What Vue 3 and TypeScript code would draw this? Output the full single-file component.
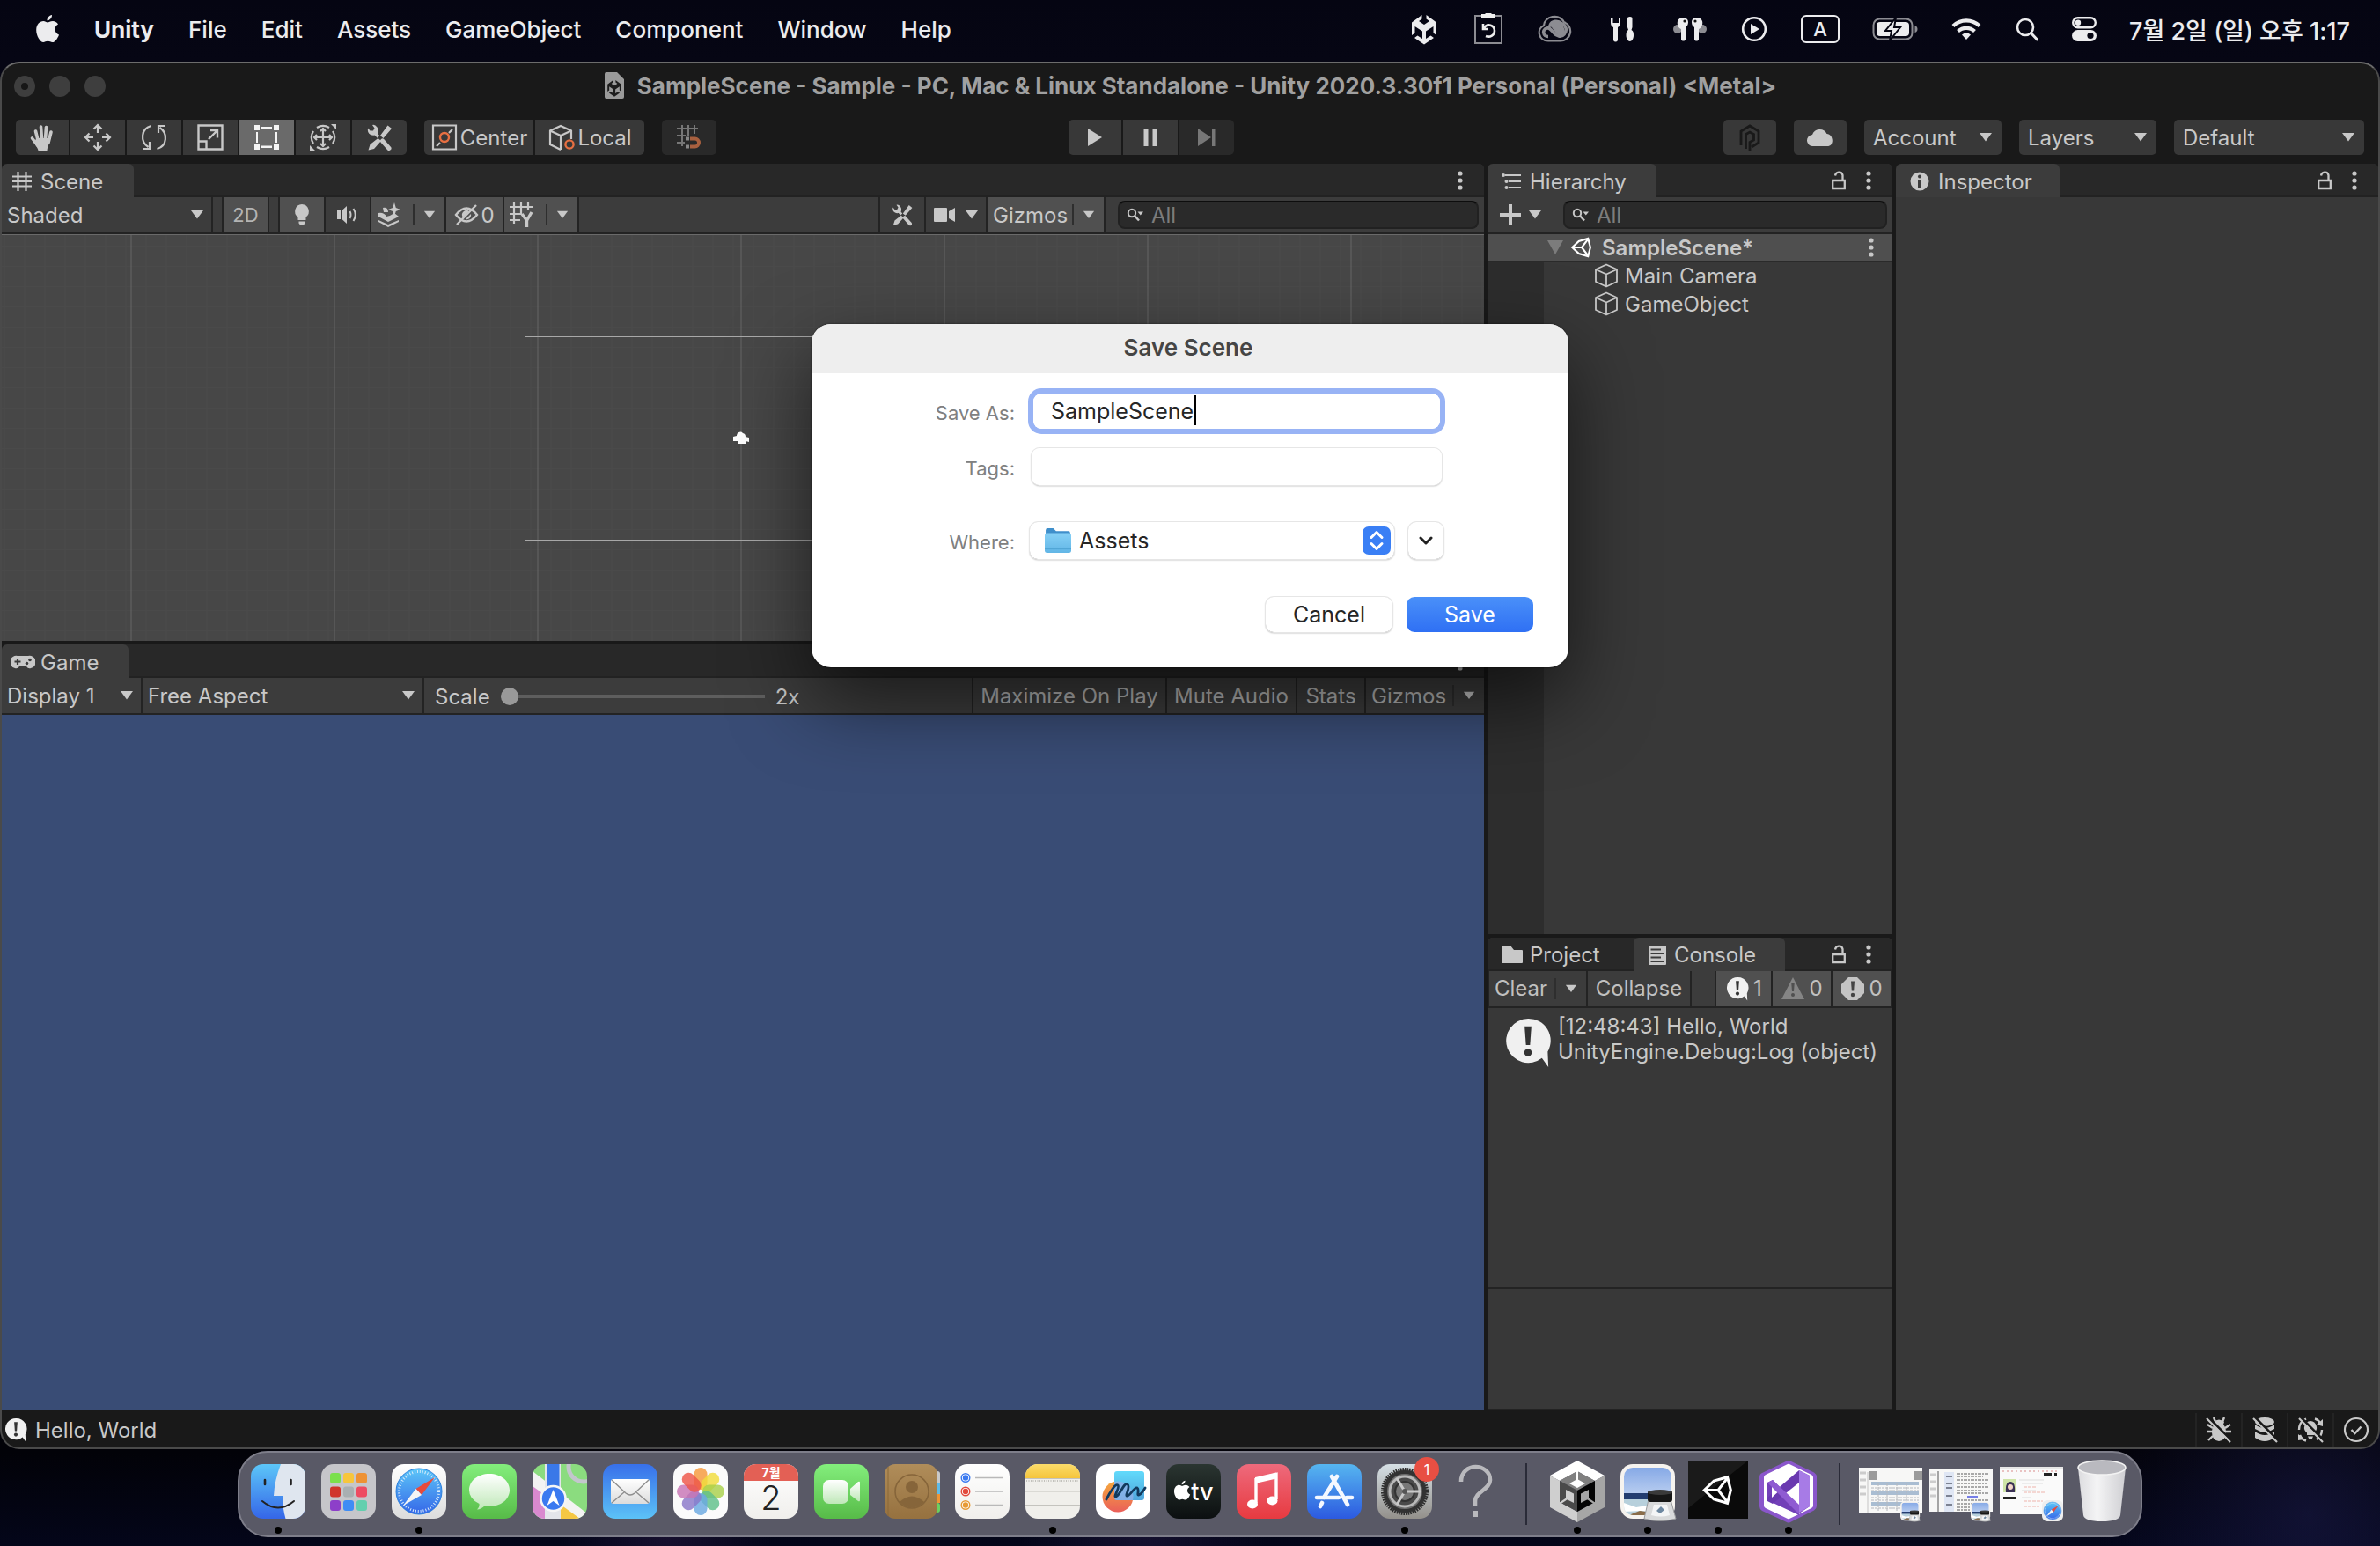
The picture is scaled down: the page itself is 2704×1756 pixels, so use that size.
<script setup lang="ts">
import { ref } from 'vue'

interface SceneObject {
  id: number
  name: string
}

const menus: string[] = ['File', 'Edit', 'Assets', 'GameObject', 'Component', 'Window', 'Help']
const objects: SceneObject[] = [
  { id: 1, name: 'Main Camera' },
  { id: 2, name: 'GameObject' },
]
const petals: { angle: number; color: string }[] = [
  { angle: 0, color: '#f5993a' },
  { angle: 45, color: '#f0dc3c' },
  { angle: 90, color: '#a8cf4a' },
  { angle: 135, color: '#5fbf8a' },
  { angle: 180, color: '#6aa8e0' },
  { angle: 225, color: '#8a78c8' },
  { angle: 270, color: '#c774b4' },
  { angle: 315, color: '#ee5548' },
]
const launchTiles: string[] = [
  '#7be04c', '#f7c63c', '#ee9234',
  '#d0352b', '#a9afb2', '#ee4b62',
  '#8d3fc9', '#3f8df5', '#62cfae',
]

const tool = ref('rect')
const fileName = ref('SampleScene')
const tags = ref('')
const sceneQuery = ref('')
const treeQuery = ref('')
const zoom = ref(1)
</script>

<template>
  <svg class="sprite" aria-hidden="true">
    <defs>
      <linearGradient id="gBlue" x1="0" y1="0" x2="0" y2="1"><stop offset="0" stop-color="#5cc6f8" /><stop offset="1" stop-color="#3566e8" /></linearGradient>
      <linearGradient id="gMail" x1="0" y1="0" x2="0" y2="1"><stop offset="0" stop-color="#3870ea" /><stop offset="1" stop-color="#5cc2f7" /></linearGradient>
      <linearGradient id="gStore" x1="0" y1="0" x2="0" y2="1"><stop offset="0" stop-color="#56b6f0" /><stop offset="1" stop-color="#2c5ae0" /></linearGradient>
      <linearGradient id="gGreen" x1="0" y1="0" x2="0" y2="1"><stop offset="0" stop-color="#83ee7c" /><stop offset="1" stop-color="#57bb48" /></linearGradient>
      <linearGradient id="gWhite" x1="0" y1="0" x2="0" y2="1"><stop offset="0" stop-color="#ffffff" /><stop offset="1" stop-color="#dcdcdc" /></linearGradient>
      <linearGradient id="gPaper" x1="0" y1="0" x2="0" y2="1"><stop offset="0" stop-color="#ffffff" /><stop offset="1" stop-color="#f0efec" /></linearGradient>
      <linearGradient id="gBubble" x1="0" y1="0" x2="0" y2="1"><stop offset="0" stop-color="#ffffff" /><stop offset="1" stop-color="#bfe8b8" /></linearGradient>
      <linearGradient id="gBrown" x1="0" y1="0" x2="0" y2="1"><stop offset="0" stop-color="#b08d5a" /><stop offset="1" stop-color="#96713f" /></linearGradient>
      <linearGradient id="gRed" x1="0" y1="0" x2="0" y2="1"><stop offset="0" stop-color="#ee6a7c" /><stop offset="1" stop-color="#e73a40" /></linearGradient>
      <linearGradient id="gTv" x1="0" y1="0" x2="0" y2="1"><stop offset="0" stop-color="#2a3531" /><stop offset="1" stop-color="#0b0f10" /></linearGradient>
      <linearGradient id="gGear" x1="0" y1="0" x2="0" y2="1"><stop offset="0" stop-color="#d5dfe5" /><stop offset="1" stop-color="#93908b" /></linearGradient>
      <linearGradient id="gYellow" x1="0" y1="0" x2="0" y2="1"><stop offset="0" stop-color="#fbdc6a" /><stop offset="1" stop-color="#f5c53c" /></linearGradient>
      <linearGradient id="gOrange" x1="0" y1="0" x2="0" y2="1"><stop offset="0" stop-color="#f5a83c" /><stop offset="1" stop-color="#ea5f5a" /></linearGradient>
      <linearGradient id="gCyan" x1="0" y1="0" x2="0" y2="1"><stop offset="0" stop-color="#62dafb" /><stop offset="1" stop-color="#4fa6dc" /></linearGradient>
      <linearGradient id="gSky" x1="0" y1="0" x2="0" y2="1"><stop offset="0" stop-color="#86a9e6" /><stop offset="1" stop-color="#b8cdf0" /></linearGradient>
      <linearGradient id="gTrash" x1="0" y1="0" x2="1" y2="0"><stop offset="0" stop-color="#dcdcdf" /><stop offset=".4" stop-color="#f4f4f5" /><stop offset="1" stop-color="#cfcfd3" /></linearGradient>
      <linearGradient id="gFolder" x1="0" y1="0" x2="0" y2="1"><stop offset="0" stop-color="#86d0f6" /><stop offset="1" stop-color="#62b6e6" /></linearGradient>
      <clipPath id="tile"><rect width="62" height="62" rx="14" /></clipPath>
      <clipPath id="shot"><rect x="4" y="4" width="54" height="54" rx="10" /></clipPath>
    </defs>
    <symbol id="down" viewBox="0 0 16 10"><path d="M1 0h14L8 9.500z" fill="currentColor" /></symbol>
    <symbol id="dots" viewBox="0 0 6 22"><g fill="currentColor"><circle cx="3" cy="3" r="2.600" /><circle cx="3" cy="11" r="2.600" /><circle cx="3" cy="19" r="2.600" /></g></symbol>
    <symbol id="lock" viewBox="0 0 18 22"><path d="M2.200 11h13.600v9H2.200zM5 5.500C5.500 1 12.500 0 13.500 5V11" fill="none" stroke="currentColor" stroke-width="2.300" /></symbol>
    <symbol id="lens" viewBox="0 0 20 16"><circle cx="6" cy="6" r="4.200" fill="none" stroke="currentColor" stroke-width="2" /><path d="M9 9l5 5.500" stroke="currentColor" stroke-width="2.500" /><path d="M12.500 4.500h6.500l-3.200 4z" fill="currentColor" /></symbol>
    <symbol id="log" viewBox="0 0 28 30"><path d="M14 1a13 13 0 1 0 8.200 23.200L26 29.500l-.4-9A13 13 0 0 0 14 1z" fill="#f0f0f0" /><path d="M12 5.500h4l-.8 11h-2.400z" fill="#333" /><circle cx="14" cy="21" r="2.200" fill="#333" /></symbol>
    <symbol id="cube" viewBox="0 0 28 28"><path d="M14 1.500L26 7v14l-12 5.500L2 21V7zM2 7l12 5.500L26 7M14 12.500v14" fill="none" stroke="currentColor" stroke-width="1.800" stroke-linejoin="round" /></symbol>
    <symbol id="unityOld" viewBox="0 0 32 32"><path d="M3 16L13 6.500 27 2.500 30.500 16 27 29.500 13 25.500zM3 16h14.500L27 3.500M17.500 16L27 28.500" fill="none" stroke="currentColor" stroke-width="2.800" stroke-linejoin="miter" /></symbol>
    <symbol id="kit" viewBox="0 0 32 32"><path d="M10.500 10.500L15 15.500" stroke="currentColor" stroke-width="3.600" /><path d="M19.500 20L27 28.500" stroke="currentColor" stroke-width="5" stroke-linecap="round" /><path d="M5.500 8.500L3 5.500Q2 11 6 13t8-1q2-4-.5-7.500T8 2l2.500 3.500-1.500 3z" fill="currentColor" /><path d="M25.500 2.500l4.500 3.500-9.500 11-3.500-3zM14.500 17l3.500 3-8 9-6.500 1.500 2-6.500z" fill="currentColor" /></symbol>
    <symbol id="apple" viewBox="0 0 28 34"><path d="M19 1c.3 3-2.500 6.500-5.500 6.300C13.200 4.500 16 1.500 19 1zM14 9.600c1.500 0 3-1.600 6-1.600 2.300 0 4.800 1.300 6 3.400-5.200 3-4.300 10 1 12-1.200 3.600-4.300 8.600-7.400 8.600-2 0-3-1.200-5.300-1.200S11 32 9.200 32C5.600 32 1.200 24.500 1.200 18.200 1.200 11.600 5.400 8 9.300 8c2 0 3.500 1.600 4.700 1.600z" fill="currentColor" /></symbol>
    <symbol id="unityNew" viewBox="0 0 32 36"><path d="M2 25V10.500L13.500 2v4.500L10 9l6 4 6-4-3.500-2.500V2L30 10.500V25l-3.500-2.500V15L18 20.500v8.500l5.500-3.500L27 28l-11 7.500L5 28l3.500-2.500L14 29v-8.500L5.500 15v7.500z" fill="currentColor" /></symbol>
    <symbol id="compass" viewBox="0 0 62 62"><circle cx="31" cy="31" r="26" fill="url(#gBlue)" stroke="#2b7fdc" stroke-width="1" /><circle cx="31" cy="31" r="22.500" fill="none" stroke="#d9ecfb" stroke-width="3" stroke-dasharray="1 1.950" /><path d="M49 15L34 35l-6.500-7z" fill="#e84a3c" /><path d="M13 47l14.500-19 6.500 7z" fill="#f5f5f5" /></symbol>
    <symbol id="photo" viewBox="0 0 70 66"><rect width="62" height="62" rx="14" fill="#f6f3ef" /><g clip-path="url(#shot)"><rect x="4" y="4" width="54" height="30" fill="url(#gSky)" /><rect x="4" y="33" width="54" height="8" fill="#233d70" /><path d="M4 40h54v20H4z" fill="#b7d0dc" /><path d="M4 44l14 5 12-2 10 4v4l-16-2-20 1z" fill="#fff" /><path d="M12 57l10-4 14 2 4 4H10z" fill="#8a6d4a" /></g><path d="M32 40h25l6 22q-18 5-36 0z" fill="#d9dadb" stroke="#9a9b9d" /><path d="M38 46h15l3 12q-10 3-21 0z" fill="#f4f5f6" /><path d="M41 53l5-5 4 4-5 4z" fill="#6d87a0" /><rect x="31" y="30" width="28" height="13" rx="3" fill="#161616" /><ellipse cx="45" cy="32" rx="14" ry="3" fill="#3a3a3a" /></symbol>
  </svg>

  <div class="desktop">
    <header class="menubar">
      <nav class="menus" aria-label="Application menu">
        <button class="menu" aria-label="Apple"><svg class="apple"><use href="#apple" /></svg></button>
        <button class="menu strong">Unity</button>
        <button v-for="m in menus" :key="m" class="menu">{{ m }}</button>
      </nav>
      <div class="extras">
        <svg class="x36" viewBox="0 0 36 36"><use href="#unityNew" x="2" width="32" height="36" /></svg>
        <svg class="x36" viewBox="0 0 36 36"><path d="M3 3h30v31H3z" fill="none" stroke="#8c8c92" stroke-width="2" /><path d="M10 1h4l1-1h6l1 1h4v5H10z" fill="#eee" /><path d="M13 12v6h6M13.500 17.500C18 10 26 14 26 20c0 5-5 8-10 6" fill="none" stroke="#eee" stroke-width="2.600" transform="translate(-1 0)" /></svg>
        <svg class="x40" viewBox="0 0 40 36"><path d="M13 31.500h14a11 11 0 0 0 4-21.300C25 0 9 3 8 14-1 18 2 31.500 13 31.500z" fill="none" stroke="#8c8c92" stroke-width="2.200" /><path d="M13 26.500c-6 0-7.500-8-1.500-9.500 3-1 5 2 8 5.500s8 5.500 11.500 1.500a7.500 7.500 0 0 0-3-12.500C24 8 17 8.500 15 14c3-1 6 1 9 5l4 4" fill="none" stroke="#8c8c92" stroke-width="3.600" /><path d="M20 11q8-2 11 6t-4 9q-4-1-8-7t-5-5z" fill="#8c8c92" /></svg>
        <svg class="x40" viewBox="0 0 40 32"><g transform="translate(4 0)"><path d="M3 3v6c0 3 1.500 4 3 5v15q2.500 3 5 0V14c1.500-1 3-2 3-5V3l-2 0v6H5.500V3z" fill="currentColor" /><path d="M22 3q3-2 5.500 0v11l-1 3c2 1 2.500 3 2.500 6 0 4-2 7-4.200 7S20.500 27 20.500 23c0-3 .5-5 2.500-6l-1-3z" fill="currentColor" /></g></svg>
        <svg class="x40" viewBox="0 0 40 34"><circle cx="6" cy="17" r="5" fill="#8c8c92" /><circle cx="34" cy="17" r="5" fill="#8c8c92" /><path d="M6 8c2-6 12-5 12 1 0 4-2 5-3 6v14c-1 2-4 2-5 0V17C7 16 5 12 6 8zM34 8c-2-6-12-5-12 1 0 4 2 5 3 6v14c1 2 4 2 5 0V17c3-1 5-5 4-9z" fill="currentColor" /><circle cx="14" cy="8" r="1.600" fill="#111" /><circle cx="26" cy="8" r="1.600" fill="#111" /></svg>
        <svg class="x32" viewBox="0 0 32 32"><circle cx="16" cy="16" r="12.800" fill="none" stroke="currentColor" stroke-width="2.600" /><path d="M12 10l10 6-10 6z" fill="currentColor" /></svg>
        <span class="input-source">A</span>
        <svg class="battery" viewBox="0 0 52 26"><rect x="1.500" y="1.500" width="44" height="23" rx="7" fill="none" stroke="#8c8c92" stroke-width="2" /><path d="M48.500 9v8q3-1 3-4t-3-4z" fill="#8c8c92" /><rect x="5" y="5" width="37" height="16" rx="4" fill="currentColor" /><path d="M27 0L15 15h7l-2 11 12-15h-7z" fill="currentColor" stroke="#050512" stroke-width="2" /></svg>
        <svg class="x36" viewBox="0 0 36 28"><path d="M3 10.500a21.500 21.500 0 0 1 30 0M8.500 16.500a14 14 0 0 1 19 0" fill="none" stroke="currentColor" stroke-width="4.200" /><path d="M18 26l-5-5.500a7.500 7.500 0 0 1 10 0z" fill="currentColor" /></svg>
        <svg class="x28" viewBox="0 0 28 28"><circle cx="12" cy="12" r="9" fill="none" stroke="currentColor" stroke-width="2.600" /><path d="M18.500 18.500l7 7.500" stroke="currentColor" stroke-width="3" stroke-linecap="round" /></svg>
        <svg class="x28" viewBox="0 0 28 28"><rect x="1.200" y="1.200" width="25.600" height="11" rx="5.500" fill="none" stroke="currentColor" stroke-width="2.400" /><circle cx="7" cy="6.700" r="3.200" fill="currentColor" /><rect y="15" width="28" height="13" rx="6.500" fill="currentColor" /><circle cx="21" cy="21.500" r="3.600" fill="#050512" /></svg>
        <time class="clock">7월 2일 (일) 오후 1:17</time>
      </div>
    </header>

    <main class="editor">
      <div class="titlebar">
        <div class="lights"><i class="edited"></i><i></i><i></i></div>
        <h1 class="title">
          <svg class="doc" viewBox="0 0 24 32"><path d="M3 1h12l8 8v20q0 2-2 2H3q-2 0-2-2V3q0-2 2-2z" fill="#9a9a9a" /><use href="#unityNew" x="3" y="9" width="18" height="20" color="#1c1c1c" /></svg>
          SampleScene - Sample - PC, Mac &amp; Linux Standalone - Unity 2020.3.30f1 Personal (Personal) &lt;Metal&gt;
        </h1>
      </div>

      <div class="maintools">
        <div class="btns">
          <button class="tb" aria-label="Hand" @click="tool = 'hand'"><svg viewBox="0 0 32 32"><path d="M8.500 9l3 12M14.500 4l1 14M20.500 4.500L19.500 18M26 10l-3 12M4.500 17l7 9" stroke="currentColor" stroke-width="3.600" stroke-linecap="round" /><path d="M9.500 17h15.500c0 6-3 8-3.500 14h-10c-.5-3-4-7-5-9z" fill="currentColor" /></svg></button>
          <button class="tb" aria-label="Move" @click="tool = 'move'"><svg viewBox="0 0 32 32"><path d="M16 2v9M16 21v9M2 16h9M21 16h9M11.500 6.500L16 2l4.500 4.500M11.500 25.500L16 30l4.500-4.500M6.500 11.500L2 16l4.500 4.500M25.500 11.500L30 16l-4.500 4.500" fill="none" stroke="currentColor" stroke-width="2.200" /></svg></button>
          <button class="tb" aria-label="Rotate" @click="tool = 'rotate'"><svg viewBox="0 0 32 32"><path d="M12.500 3C1 6 0 21 9.500 27M3.500 29h7.500v-8M19.500 29C31 26 32 11 22.500 5M28.500 3H21v8" fill="none" stroke="currentColor" stroke-width="2.200" /></svg></button>
          <button class="tb" aria-label="Scale" @click="tool = 'scale'"><svg viewBox="0 0 32 32"><path d="M2.500 2.500h27v27h-27zM2.500 20.500h9v9M14 18L24 8M16 8h8v8.500" fill="none" stroke="currentColor" stroke-width="2.400" /></svg></button>
          <button class="tb on" aria-label="Rect" @click="tool = 'rect'"><svg viewBox="0 0 32 32"><path d="M2 2h6v6H2zM24 2h6v6h-6zM2 24h6v6H2zM24 24h6v6h-6zM10 4h12v2.500H10zM10 25.500h12V28H10zM4 10h2v12H4zM26 10h2v12h-2z" fill="#f4f4f4" /></svg></button>
          <button class="tb" aria-label="Transform" @click="tool = 'transform'"><svg viewBox="0 0 32 32"><path d="M9 5a13 13 0 0 1 14 0M27 9a13 13 0 0 1 0 14M23 27a13 13 0 0 1-14 0M5 23A13 13 0 0 1 5 9M16 6v20M6 16h20M13 9l3-3 3 3M13 23l3 3 3-3M9 13l-3 3 3 3M23 13l3 3-3 3" fill="none" stroke="currentColor" stroke-width="2.200" /><path d="M25 1h6v6zM1 25v6h6z" fill="currentColor" /></svg></button>
          <button class="tb" aria-label="Custom tools" @click="tool = 'custom'"><svg><use href="#kit" /></svg></button>
        </div>
        <div class="btns pivots">
          <button class="tb wide"><svg viewBox="0 0 32 32"><path d="M3 2.500h26v27H3zM7 26l4-4M21 11l4-4" fill="none" stroke="currentColor" stroke-width="2.200" /><circle cx="16" cy="16" r="5" fill="none" stroke="#e66f42" stroke-width="2.400" /></svg>Center</button>
          <button class="tb wide"><svg viewBox="0 0 32 32"><path d="M15 30L3 24V8.500L15 3l12 5.500V18M3 8.500L15 14l12-5.500M15 14v16" fill="none" stroke="currentColor" stroke-width="2.200" /><circle cx="25" cy="24" r="4.600" fill="#383838" stroke="#e66f42" stroke-width="2.400" /></svg>Local</button>
        </div>
        <button class="tb off" aria-label="Grid snapping" disabled><svg viewBox="0 0 32 32"><path d="M8 2v24M15 2v13M22 2v10M2 6h24M2 14h10M2 22h9" fill="none" stroke="#777" stroke-width="2" /><path d="M17 17.500h5.500a4.500 4.500 0 0 1 0 9H17" fill="none" stroke="#a8603f" stroke-width="4" /><path d="M12 15.500h4v4h-4zM12 24.500h4v4h-4z" fill="#888" /></svg></button>
        <span class="spring a"></span>
        <div class="btns">
          <button class="tb" aria-label="Play"><svg viewBox="0 0 32 32"><path d="M8 6l16 10L8 26z" fill="currentColor" /></svg></button>
          <button class="tb" aria-label="Pause"><svg viewBox="0 0 32 32"><path d="M8.500 6h5v20h-5zM18.500 6h5v20h-5z" fill="currentColor" /></svg></button>
          <button class="tb off" aria-label="Step" disabled><svg viewBox="0 0 32 32"><path d="M6 6l15 10L6 26zM22 6h3.500v20H22z" fill="#777" /></svg></button>
        </div>
        <span class="spring b"></span>
        <div class="services">
          <button class="tb" aria-label="Plastic SCM"><svg viewBox="0 0 32 32"><path d="M6 25V9L16 3l10 6v13l-8 5M11.500 29V12.500L16 10l4.500 2.500v6.500L16 21.500V31" fill="none" stroke="#191919" stroke-width="2.800" /></svg></button>
          <button class="tb" aria-label="Cloud"><svg viewBox="0 0 32 32"><path d="M8 26a6.500 6.500 0 0 1-1-13 9 9 0 0 1 16.500-1C31 12 32.500 26 24 26z" fill="currentColor" /></svg></button>
          <label class="drop box"><select aria-label="Account"><option>Account</option></select><svg class="arr"><use href="#down" /></svg></label>
          <label class="drop box"><select aria-label="Layers"><option>Layers</option></select><svg class="arr"><use href="#down" /></svg></label>
          <label class="drop box layout"><select aria-label="Layout"><option>Default</option></select><svg class="arr"><use href="#down" /></svg></label>
        </div>
      </div>

      <div class="workspace">
        <div class="column">
          <section class="panel scene">
            <div class="tabs">
              <button class="tab on t-scene"><svg class="i22" viewBox="0 0 22 22"><path d="M6.500 0v22M15.500 0v22M0 5.500h22M0 11h22M0 16.500h22" stroke="currentColor" stroke-width="2.200" /></svg>Scene</button>
              <span class="tab-tools"><button class="mini" aria-label="Panel menu"><svg class="dots"><use href="#dots" /></svg></button></span>
            </div>
            <div class="bar">
              <label class="drop shaded"><select aria-label="Draw mode"><option>Shaded</option></select><svg class="arr"><use href="#down" /></svg></label>
              <div class="cells"><button class="cell on w50 dim">2D</button></div>
              <div class="cells">
                <button class="cell on w50" aria-label="Lighting"><svg class="i24" viewBox="0 0 24 24"><path d="M12 0a8 8 0 0 1 4.500 14.500V18h-9v-3.500A8 8 0 0 1 12 0zM8.500 19.500h7v2l-1.500 2h-4l-1.500-2z" fill="currentColor" /></svg></button>
                <button class="cell w50" aria-label="Audio"><svg class="i24" viewBox="0 0 24 24"><path d="M0 7h4v10H0zM5.500 7L11 2v20l-5.500-5z" fill="currentColor" /><path d="M14.500 8q2 4 0 8M18.500 5q4.500 7 0 14" fill="none" stroke="currentColor" stroke-width="2" /></svg></button>
                <button class="cell on w82 split" aria-label="Effects"><svg class="i28" viewBox="0 0 28 28"><path d="M2 12q6-1 9 4 5-1 9-4l5 4-12 6-11-6zM2 20l11 5 12-5v2l-12 6L2 22z" fill="currentColor" /><path d="M20 0l1.800 6L27 8l-5.200 2L20 16l-1.800-6L13 8l5.200-2zM7 6q6-1 6 5H8z" fill="currentColor" /></svg><svg class="arr"><use href="#down" /></svg></button>
                <button class="cell on w64 tight"><svg class="i28" viewBox="0 0 28 28"><path d="M2 14q12-15 24 0-12 15-24 0zM3 25L25 3" fill="none" stroke="currentColor" stroke-width="2.400" /><path d="M10 17a5 5 0 0 1 7-7zM13 19a5 5 0 0 0 6-6z" fill="currentColor" /></svg>0</button>
                <button class="cell on w82 split" aria-label="Grid"><svg class="i28" viewBox="0 0 28 28"><path d="M5 0v24M13 0v14M21 0v8M0 5h26M0 13h13M0 20h12" stroke="currentColor" stroke-width="2.200" /><path d="M14 13l5.500 7.500L25 11M19.500 20v8" fill="none" stroke="currentColor" stroke-width="3.400" /></svg><svg class="arr"><use href="#down" /></svg></button>
              </div>
              <span class="fill"></span>
              <div class="cells">
                <button class="cell w50" aria-label="Component tools"><svg class="i26"><use href="#kit" /></svg></button>
                <button class="cell w68 loose" aria-label="Camera"><svg class="i26" viewBox="0 0 26 20"><path d="M2 2h13q1 0 1 1v14q0 1-1 1H2q-1 0-1-1V3q0-1 1-1zM18 6l7-4v16l-7-4z" fill="currentColor" /></svg><svg class="arr"><use href="#down" /></svg></button>
                <button class="cell on w132 split">Gizmos<svg class="arr"><use href="#down" /></svg></button>
              </div>
              <label class="search scene-search"><svg class="lens"><use href="#lens" /></svg><input v-model="sceneQuery" placeholder="All" aria-label="Search scene" /></label>
            </div>
            <div class="viewport"><div class="frame"><svg class="cam" viewBox="0 0 20 16"><path d="M5 5a4 4 0 0 1 7-3 4 4 0 0 1 3 4l4 1v5l-4-1v3H7v-3H1V6z" fill="#fff" /></svg></div></div>
          </section>

          <section class="panel game">
            <div class="tabs">
              <button class="tab on t-game"><svg class="i28" viewBox="0 0 28 28"><path d="M8 7h12a7 7 0 0 1 3 14q-3 1-5-2h-8q-2 3-5 2A7 7 0 0 1 8 7z" fill="currentColor" /><path d="M8 10v7M4.500 13.500h7" stroke="#3c3c3c" stroke-width="2.200" /><circle cx="22" cy="11.500" r="1.800" fill="#3c3c3c" /><circle cx="18.500" cy="15.500" r="1.800" fill="#3c3c3c" /></svg>Game</button>
              <span class="tab-tools"><button class="mini" aria-label="Panel menu"><svg class="dots"><use href="#dots" /></svg></button></span>
            </div>
            <div class="bar">
              <label class="drop display"><select aria-label="Display"><option>Display 1</option></select><svg class="arr"><use href="#down" /></svg></label>
              <label class="drop aspect"><select aria-label="Aspect"><option>Free Aspect</option></select><svg class="arr"><use href="#down" /></svg></label>
              <label class="scale">Scale <input v-model="zoom" type="range" min="1" max="5" /> <output>2x</output></label>
              <span class="fill"></span>
              <div class="cells muted">
                <button class="cell w218">Maximize On Play</button>
                <button class="cell w146">Mute Audio</button>
                <button class="cell w76">Stats</button>
                <button class="cell w132 split">Gizmos<svg class="arr"><use href="#down" /></svg></button>
              </div>
            </div>
            <div class="gameview"></div>
          </section>
        </div>

        <div class="column">
          <section class="panel hierarchy">
            <div class="tabs">
              <button class="tab on t-tree"><svg class="i22" viewBox="0 0 22 18"><path d="M4 2h18M8 9h14M8 16h14" stroke="currentColor" stroke-width="2.200" /><circle cx="2" cy="2" r="2" fill="currentColor" /><circle cx="5.500" cy="9" r="2" fill="currentColor" /><circle cx="5.500" cy="16" r="2" fill="currentColor" /></svg>Hierarchy</button>
              <span class="tab-tools"><button class="mini" aria-label="Lock"><svg class="lock"><use href="#lock" /></svg></button><button class="mini" aria-label="Panel menu"><svg class="dots"><use href="#dots" /></svg></button></span>
            </div>
            <div class="bar">
              <button class="add" aria-label="Create"><svg class="i24" viewBox="0 0 24 24"><path d="M12 0v24M0 12h24" stroke="currentColor" stroke-width="4" /></svg><svg class="arr"><use href="#down" /></svg></button>
              <label class="search"><svg class="lens"><use href="#lens" /></svg><input v-model="treeQuery" placeholder="All" aria-label="Search hierarchy" /></label>
            </div>
            <div class="root">
              <svg class="fold" viewBox="0 0 18 16"><path d="M0 0h18L9 16z" fill="#7c7c7c" /></svg>
              <svg class="i24 bright"><use href="#unityOld" /></svg>
              <strong>SampleScene*</strong>
              <button class="mini" aria-label="Scene menu"><svg class="dots"><use href="#dots" /></svg></button>
            </div>
            <ul class="tree">
              <li v-for="o in objects" :key="o.id"><svg class="i28"><use href="#cube" /></svg>{{ o.name }}</li>
            </ul>
          </section>

          <section class="panel console">
            <div class="tabs">
              <button class="tab t-project"><svg class="i24" viewBox="0 0 24 22"><path d="M0 1q0-1 1-1h9l4 5h9q1 0 1 1v13q0 1-1 1H1q-1 0-1-1z" fill="currentColor" /></svg>Project</button>
              <button class="tab on t-console"><svg class="i22" viewBox="0 0 20 22"><rect width="20" height="22" rx="1" fill="currentColor" /><path d="M2.500 4.500H14M2.500 9H18M2.500 13.500H14M2.500 18H18" stroke="#3c3c3c" stroke-width="2" /></svg>Console</button>
              <span class="tab-tools"><button class="mini" aria-label="Lock"><svg class="lock"><use href="#lock" /></svg></button><button class="mini" aria-label="Panel menu"><svg class="dots"><use href="#dots" /></svg></button></span>
            </div>
            <div class="bar">
              <div class="cells">
                <button class="cell w110 split">Clear<svg class="arr"><use href="#down" /></svg></button>
                <button class="cell w116">Collapse</button>
              </div>
              <span class="fill"></span>
              <div class="cells counts">
                <button class="cell on w62"><svg class="i28"><use href="#log" /></svg>1</button>
                <button class="cell on w66"><svg class="i28" viewBox="0 0 28 28"><path d="M14 1l13 25H1z" fill="#858585" /><path d="M12.300 8h3.400l-.7 9h-2z" fill="#505050" /><circle cx="14" cy="21" r="2" fill="#505050" /></svg>0</button>
                <button class="cell on w66"><svg class="i28" viewBox="0 0 28 28"><path d="M9 1h10l8 8v10l-8 8H9l-8-8V9z" fill="#c4c4c4" /><path d="M12 5.500h4l-.8 11h-2.400z" fill="#444" /><circle cx="14" cy="21" r="2.200" fill="#444" /></svg>0</button>
              </div>
            </div>
            <div class="logs">
              <svg class="logicon"><use href="#log" /></svg>
              <p>[12:48:43] Hello, World<br />UnityEngine.Debug:Log (object)</p>
            </div>
            <div class="details"></div>
          </section>
        </div>

        <section class="panel inspector">
          <div class="tabs">
            <button class="tab on t-info"><svg class="i22" viewBox="0 0 22 22"><circle cx="11" cy="11" r="10.500" fill="currentColor" /><path d="M9 9h4v9H9z" fill="#3c3c3c" /><circle cx="11" cy="5.500" r="2" fill="#3c3c3c" /></svg>Inspector</button>
            <span class="tab-tools"><button class="mini" aria-label="Lock"><svg class="lock"><use href="#lock" /></svg></button><button class="mini" aria-label="Panel menu"><svg class="dots"><use href="#dots" /></svg></button></span>
          </div>
        </section>
      </div>

      <footer class="status">
        <svg class="i28"><use href="#log" /></svg>
        <span class="message">Hello, World</span>
        <button class="stat" aria-label="Debugger"><svg class="i30" viewBox="0 0 30 30"><path d="M9 6q6-5 12 0l-1 3q3 3 3 9 0 9-8 10-8-1-8-10 0-6 3-9z" fill="currentColor" /><path d="M9 1l2 5M21 1l-2 5M2 9l6 4M28 9l-6 4M1 17h7M29 17h-7M3 27l5-5M27 27l-5-5" stroke="currentColor" stroke-width="2.400" /><path d="M3 1l27 27" stroke="#191919" stroke-width="3" /><path d="M1 2l27 27" stroke="currentColor" stroke-width="2.200" /></svg></button>
        <button class="stat" aria-label="Cache server"><svg class="i30" viewBox="0 0 30 30"><ellipse cx="15" cy="6" rx="11" ry="5" fill="currentColor" /><path d="M4 9q11 8 22 0v5q-11 7-22 0zM4 17q11 8 22 0v7q-11 8-22 0z" fill="currentColor" /><path d="M4 1l26 26" stroke="#191919" stroke-width="3" /><path d="M2 2l27 27" stroke="currentColor" stroke-width="2.200" /></svg></button>
        <button class="stat" aria-label="Auto lighting"><svg class="i30" viewBox="0 0 30 30"><path d="M15 5a7.500 7.500 0 0 1 4 13.500V21h-8v-2.500A7.500 7.500 0 0 1 15 5zM12 22.500h6L16.500 26h-3z" fill="currentColor" /><path d="M10 2.500Q2 6 2 15M20 2.500q4 1 6 5M28 15q0 7-6 11M10 27.500Q5 26 3 21" fill="none" stroke="currentColor" stroke-width="2.400" /><path d="M22 9l7 2V3zM1 20v7l7-1z" fill="currentColor" /><path d="M4 1l26 26" stroke="#191919" stroke-width="3" /><path d="M2 2l27 27" stroke="currentColor" stroke-width="2.200" /></svg></button>
        <button class="stat" aria-label="Progress"><svg class="i30" viewBox="0 0 30 30"><circle cx="15" cy="15" r="13" fill="none" stroke="currentColor" stroke-width="2.200" /><path d="M9.500 15l4 4 7-7.500" fill="none" stroke="currentColor" stroke-width="2.400" /></svg></button>
      </footer>
    </main>

    <nav class="dock" aria-label="Dock">
      <button class="app" aria-label="Finder"><svg viewBox="0 0 62 62"><g clip-path="url(#tile)"><rect width="62" height="62" fill="url(#gBlue)" /><path d="M34 0Q27 18 26 36h10q0 14 3.500 26H62V0z" fill="#dfe6ef" /></g><path d="M16 18v5M45.500 18v5" stroke="#222" stroke-width="2.600" stroke-linecap="round" /><path d="M13 42q18 15 36 0" fill="none" stroke="#222" stroke-width="2" stroke-linecap="round" /></svg><i class="dot"></i></button>
      <button class="app" aria-label="Launchpad"><svg viewBox="0 0 62 62"><rect width="62" height="62" rx="14" fill="#c6c6ca" /><rect v-for="(c, n) in launchTiles" :key="n" :x="10 + (n % 3) * 15" :y="10 + Math.floor(n / 3) * 15.500" width="12" height="12" rx="3" :fill="c" /></svg></button>
      <button class="app" aria-label="Safari"><svg viewBox="0 0 62 62"><rect width="62" height="62" rx="14" fill="url(#gWhite)" /><use href="#compass" width="62" height="62" /></svg><i class="dot"></i></button>
      <button class="app" aria-label="Messages"><svg viewBox="0 0 62 62"><rect width="62" height="62" rx="14" fill="url(#gGreen)" /><path d="M31 11c13 0 23 8 23 18.500S44 48 31 48q-3 0-5.500-.6Q22 51 17 51.500q3-3 2.500-6.500Q8 39.500 8 29.500C8 19 18 11 31 11z" fill="url(#gBubble)" /></svg></button>
      <button class="app" aria-label="Maps"><svg viewBox="0 0 62 62"><g clip-path="url(#tile)"><rect width="62" height="62" fill="#8bdc7f" /><path d="M0 8L62 56v6H0z" fill="#f3f3f3" /><path d="M32 62V46l22 16z" fill="#f5c744" /><path d="M0 25l14 10v27H0z" fill="#d989cf" /><path d="M14 0h18v62H14z" fill="#e3e5ea" /><path d="M16.500 0h14v30h-14z" fill="#3a78e8" /><circle cx="58" cy="3" r="17" fill="none" stroke="#c3c6cc" stroke-width="5" /></g><circle cx="23.500" cy="39" r="14" fill="#3b7af0" stroke="#f5f5f5" stroke-width="2.500" /><path d="M23.500 29l7 18-7-5-7 5z" fill="#fff" /></svg></button>
      <button class="app" aria-label="Mail"><svg viewBox="0 0 62 62"><rect width="62" height="62" rx="14" fill="url(#gMail)" /><rect x="9" y="17" width="44" height="28" rx="3" fill="url(#gWhite)" /><path d="M10 18l16 15q5 4 10 0l16-15M10 44l14-12M52 44L38 32" fill="none" stroke="#8e8e8e" stroke-width="1.400" /></svg></button>
      <button class="app" aria-label="Photos"><svg viewBox="0 0 62 62"><rect width="62" height="62" rx="14" fill="#fbfbfb" /><rect v-for="p in petals" :key="p.angle" x="23.500" y="4" width="15" height="25" rx="7.500" :fill="p.color" fill-opacity=".82" :transform="`rotate(${p.angle} 31 31)`" /></svg></button>
      <button class="app cal" aria-label="Calendar"><svg viewBox="0 0 62 62"><g clip-path="url(#tile)"><rect width="62" height="62" fill="url(#gPaper)" /><rect width="62" height="19" fill="#e36055" /></g><text x="31" y="15" class="cal-m">7월</text><text x="31" y="52" class="cal-d">2</text></svg></button>
      <button class="app" aria-label="FaceTime"><svg viewBox="0 0 62 62"><rect width="62" height="62" rx="14" fill="url(#gGreen)" /><rect x="10" y="18" width="29" height="27" rx="7" fill="url(#gBubble)" /><path d="M41 28l9-8q2-1 2 1v20q0 2-2 1l-9-7z" fill="url(#gBubble)" /></svg></button>
      <button class="app" aria-label="Contacts"><svg viewBox="0 0 62 62"><rect x="54" y="8" width="9" height="16" rx="3" fill="#c9c9c9" /><rect x="54" y="22" width="9" height="12" fill="#5dbbe8" /><rect x="54" y="34" width="9" height="10" fill="#ef9434" /><rect x="54" y="44" width="9" height="11" rx="3" fill="#6ad160" /><rect width="60" height="62" rx="12" fill="url(#gBrown)" /><path d="M4 3v56" stroke="#8a6838" stroke-width="1" /><circle cx="31" cy="31" r="19" fill="none" stroke="#86653a" stroke-width="1.600" /><circle cx="31" cy="26" r="7" fill="#86653a" /><path d="M17 43q14-13 28 0-14 13-28 0z" fill="#86653a" /></svg></button>
      <button class="app" aria-label="Reminders"><svg viewBox="0 0 62 62"><rect width="62" height="62" rx="14" fill="url(#gPaper)" /><path d="M23 15.500h32M23 31h32M23 46.500h32" stroke="#b9b9b9" stroke-width="1.400" /><g stroke-width="1.400"><circle cx="12" cy="15.500" r="4.800" fill="#fff" stroke="#3b7af0" /><circle cx="12" cy="31" r="4.800" fill="#fff" stroke="#e2493c" /><circle cx="12" cy="46.500" r="4.800" fill="#fff" stroke="#e79a35" /></g><circle cx="12" cy="15.500" r="3.200" fill="#3b7af0" /><circle cx="12" cy="31" r="3.200" fill="#e2493c" /><circle cx="12" cy="46.500" r="3.200" fill="#e79a35" /></svg></button>
      <button class="app" aria-label="Notes"><svg viewBox="0 0 62 62"><g clip-path="url(#tile)"><rect width="62" height="62" fill="#f0efeb" /><rect width="62" height="16" fill="url(#gYellow)" /><path d="M0 16.500h62M0 31h62M0 46.500h62" stroke="#c4c3be" stroke-width="1.200" /><path d="M1 19h60" stroke="#b3b2ad" stroke-width="1.600" stroke-dasharray="1 1.500" /></g></svg><i class="dot"></i></button>
      <button class="app" aria-label="Freeform"><svg viewBox="0 0 62 62"><rect width="62" height="62" rx="14" fill="#fff" /><circle cx="25" cy="37" r="17.500" fill="url(#gOrange)" /><rect x="21" y="8" width="34" height="33" rx="3" fill="url(#gCyan)" /><path d="M21 20a17.500 17.500 0 0 1 21 21H24q-3 0-3-3z" fill="#8fb0e8" fill-opacity=".8" /><path d="M12 40c4-8 10-18 13-16s-6 14-2 13 9-17 13-14-4 14 0 13 8-11 11-9-1 9 2 8 5-5 7-8" fill="none" stroke="#123a5e" stroke-width="2.800" stroke-linecap="round" /></svg></button>
      <button class="app" aria-label="TV"><svg viewBox="0 0 62 62"><rect width="62" height="62" rx="14" fill="url(#gTv)" /><use href="#apple" x="8" y="18" width="20" height="24" color="#fff" /><text x="41" y="41" class="tv">tv</text></svg></button>
      <button class="app" aria-label="Music"><svg viewBox="0 0 62 62"><rect width="62" height="62" rx="14" fill="url(#gRed)" /><path d="M22 18l23-6.500V40" fill="none" stroke="#fff" stroke-width="3.400" /><path d="M21 15l24-5.500v7L21 22z" fill="#fff" /><path d="M22 16v28" stroke="#fff" stroke-width="3.400" /><ellipse cx="18" cy="45.500" rx="6" ry="5" fill="#fff" /><ellipse cx="40.500" cy="41.500" rx="6" ry="5" fill="#fff" /></svg></button>
      <button class="app" aria-label="App Store"><svg viewBox="0 0 62 62"><rect width="62" height="62" rx="14" fill="url(#gStore)" /><path d="M34 14L19 38M28 14l18 32M11 38h25M45 38h6M17 44l-2 4" stroke="#f4f8ff" stroke-width="4.600" stroke-linecap="round" /></svg></button>
      <button class="app" aria-label="System Settings"><svg viewBox="0 0 62 62"><rect width="62" height="62" rx="14" fill="url(#gGear)" /><circle cx="31" cy="31" r="25" fill="#6e6e6e" stroke="#2d2d2d" stroke-width="4" stroke-dasharray="1.600 1" /><circle cx="31" cy="31" r="22" fill="none" stroke="#323232" stroke-width="4" /><circle cx="31" cy="31" r="17" fill="#4a4a4a" stroke="#b9b9b9" stroke-width="3" /><circle cx="31" cy="31" r="11" fill="#777" stroke="#333" stroke-width="2" /><path d="M31 31h18M31 31L22 16M31 31l-9 15" stroke="#c9c9c9" stroke-width="3" /><circle cx="31" cy="31" r="3" fill="#555" /></svg><b class="badge">1</b><i class="dot"></i></button>
      <button class="app" aria-label="Unknown application"><svg viewBox="0 0 62 62"><path d="M15 20C15 8 24 3 31.500 3S48 8 48 18c0 11-17 13-17 24v5" fill="none" stroke="#b9b9bd" stroke-width="4.600" /><rect x="28" y="53" width="6" height="7" fill="#b9b9bd" /></svg></button>
      <span class="divider"></span>
      <button class="app" aria-label="Unity Hub"><svg viewBox="0 0 62 62"><g transform="translate(0 -4)"><path d="M0 17L31 0l31 17-11 6-20-11-20 11z" fill="#fff" /><path d="M0 17l11 6v24l20 11v12L0 53z" fill="#cfcfcf" /><path d="M62 17l-11 6v24L31 58v12l31-17z" fill="#a6a6a6" /><path d="M31 12l20 11-20 11-20-11z" fill="#808080" /><path d="M11 23l20 11v24L11 47z" fill="#4a4a4a" /><path d="M51 23L31 34v24l20-11z" fill="#050505" /><path d="M31 21l9 5-9 5-9-5zM30 8h2v14h-2z" fill="#fff" /><path d="M18 33l9 4.500V48l-9-4.500zM10 48l9-6 1 2-9 6z" fill="#cfcfcf" /><path d="M44 33l-9 4.500V48l9-4.500zM52 48l-9-6-1 2 9 6z" fill="#a6a6a6" /></g></svg><i class="dot"></i></button>
      <button class="app" aria-label="Preview"><svg viewBox="0 0 62 62"><use href="#photo" width="70" height="66" /></svg><i class="dot"></i></button>
      <button class="app" aria-label="Unity"><svg viewBox="0 0 62 62"><path d="M-3-4h68v66H-3z" fill="#0a0a0a" /><path d="M-3-4h68L-3 50z" fill="#1a1a1a" /><use href="#unityOld" x="12" y="12" width="35" height="35" color="#fff" /></svg><i class="dot"></i></button>
      <button class="app" aria-label="Visual Studio"><svg viewBox="0 0 62 62"><path d="M29-3.500q2-1 4 0l27 13q3 2 3 5v33q0 3-3 5L33 66q-2 1-4 0L1 53q-3-2-3-5V15q0-4 3-5z" fill="#8a56cb" /><path d="M30 0q1-.6 2 0l25 12q2 1 2 3v32q0 2-2 3L32 62q-1 .6-2 0L5 50q-2-1-2-3V15q0-2 2-3z" fill="#fff" /><path d="M7 21l6-3 31 31-1 9L7 41zM43 7l12 6v35l-12 8z" fill="#7240b8" /><path d="M43 7l12 6v35l-12 7z" fill="#a77be6" /><path d="M43 7L7 38v4l6 3 30-24z" fill="#6a39b0" /><path d="M12 25v13l7-6.500zM43 22v20L31 31.500z" fill="#fff" /><path d="M13 18L7 21l36 36V46z" fill="#8f5bd2" /></svg><i class="dot"></i></button>
      <span class="divider"></span>
      <button class="app" aria-label="Spreadsheet window"><svg viewBox="0 0 62 62"><path d="M-5 4h72v52H-5z" fill="#f7f7f6" /><path d="M6 8h9v10H6zM58 8h9v10h-9z" fill="#9b9b9b" /><path d="M-4 10h7M-4 18h7M-4 26h7M-4 34h7" stroke="#ccc" stroke-width="3" /><path d="M5 9v46" stroke="#c5c5c5" /><path d="M9 22h54M9 33h54M9 45h54" stroke="#a9bdd2" stroke-width="4" /><path d="M9 27h54M9 30h54M9 38h54M9 41h54M9 50h54M17 22v32M27 22v32M38 22v32M49 22v32" stroke="#b5b8bd" stroke-width="1" stroke-dasharray="3 1" /><use href="#photo" x="42" y="42" width="25" height="24" /></svg></button>
      <button class="app" aria-label="Document window"><svg viewBox="0 0 62 62"><path d="M-5 6h72v48H-5z" fill="#f7f7f6" /><path d="M-4 12h7M-4 20h7M-4 28h7M-4 36h7" stroke="#ccc" stroke-width="3" /><path d="M12 9h11v45H12z" fill="#dfe6f4" /><path d="M5 8v46" stroke="#a5a5a5" stroke-width="2" /><path d="M14 14h7M14 22h7M14 27h7M14 36h7M14 46h7" stroke="#7c8292" stroke-width="2" /><path d="M26 11h36M26 14h30M26 18h36M26 22h34M26 26h36M26 30h28M26 33h36M26 41h36M26 45h34M26 49h20M26 52h20" stroke="#8f8f8f" stroke-width="1.400" stroke-dasharray="4 1 2 1" /><path d="M38 37h12" stroke="#4a55e0" stroke-width="1.500" /><use href="#photo" x="42" y="42" width="25" height="24" /></svg></button>
      <button class="app" aria-label="Web window"><svg viewBox="0 0 62 62"><path d="M-5 3h72v54H-5z" fill="#fafafa" /><path d="M-5 3h72v3H-5z" fill="#e6e6e6" /><path d="M-2 8h66" stroke="#d98a8a" stroke-dasharray="2 3" /><path d="M45 10h9v3h-9zM57 10h3v3h-3zM-1 37h15v3H-1z" fill="#222" /><path d="M-1 17h15v15H-1z" fill="#cfe5a8" /><path d="M2 32q-1-12 5-12t5 12z" fill="#3a3054" /><circle cx="7" cy="26" r="3" fill="#f2d5c8" /><path d="M17 18h28M20 22h24M20 30h16M20 38h10" stroke="#ddd" /><path d="M22 26h14M22 32h26M22 42h22M22 48h18" stroke="#eeb4ac" stroke-dasharray="4 1" /><rect x="43" y="41" width="24" height="24" rx="6" fill="#eee" /><use href="#compass" x="43" y="41" width="24" height="24" /></svg></button>
      <button class="app" aria-label="Trash"><svg viewBox="0 0 62 62"><path d="M4 4l6 54q1 7 21 7t21-7l6-54z" fill="url(#gTrash)" /><ellipse cx="31" cy="4" rx="27" ry="8" fill="#b9b9bf" stroke="#f3f3f3" stroke-width="1.600" /></svg></button>
    </nav>

    <form class="dialog" role="dialog" aria-labelledby="dialog-title" @submit.prevent>
      <h2 id="dialog-title">Save Scene</h2>
      <div class="rows">
        <label for="save-as">Save As:</label>
        <span class="field focus"><input id="save-as" v-model="fileName" type="text" /><i class="caret"></i></span>
        <label for="tags">Tags:</label>
        <span class="field"><input id="tags" v-model="tags" type="text" /></span>
        <label for="where" class="low">Where:</label>
        <span class="where low">
          <span class="popup">
            <svg class="folder" viewBox="0 0 28 26"><path d="M1 2q0-2 2-2h6l3 3h13q2 0 2 2v6H1z" fill="#3f8fcb" /><rect x="0" y="5" width="28" height="21" rx="2" fill="url(#gFolder)" /><path d="M0 22h28" stroke="#4fa3d4" /></svg>
            <select id="where"><option>Assets</option></select>
            <svg class="stepper" viewBox="0 0 32 32"><rect width="32" height="32" rx="7" fill="#3a7ff5" /><path d="M10 12.500l6-6 6 6M10 19.500l6 6 6-6" fill="none" stroke="#fff" stroke-width="3" stroke-linecap="round" stroke-linejoin="round" /></svg>
          </span>
          <button type="button" class="expand" aria-label="Expand"><svg viewBox="0 0 16 10"><path d="M2 2l6 6 6-6" fill="none" stroke="#222" stroke-width="3" stroke-linecap="round" stroke-linejoin="round" /></svg></button>
        </span>
      </div>
      <div class="actions">
        <button type="button" class="action">Cancel</button>
        <button type="submit" class="action primary">Save</button>
      </div>
    </form>
  </div>
</template>

<style>
body {
  margin: 0;
  background: #04050f;
}
</style>

<style scoped>
.sprite {
  position: absolute;
  width: 0;
  height: 0;
}
.desktop {
  position: relative;
  display: flex;
  flex-direction: column;
  min-height: 100vh;
  box-sizing: border-box;
  font-family: Inter, "Noto Sans CJK KR", "Liberation Sans", sans-serif;
  font-size: 24px;
  color: #c8c8c8;
  background:
    radial-gradient(circle at 28% 99%, rgba(60, 35, 90, 0.35), transparent 120px),
    radial-gradient(circle at 48% 99%, rgba(60, 40, 100, 0.3), transparent 140px),
    radial-gradient(circle at 97% 98%, rgba(30, 30, 80, 0.5), transparent 240px),
    linear-gradient(#050512, #060614 70px, #020208 94%, #04061a);
}
.desktop *,
.desktop *::before {
  box-sizing: border-box;
}
button,
input,
select {
  margin: 0;
  padding: 0;
  border: 0;
  background: none;
  color: inherit;
  font: inherit;
  outline: none;
}
select {
  appearance: none;
}
svg {
  display: block;
  flex: none;
}

/* macOS menu bar */
.menubar {
  display: flex;
  justify-content: space-between;
  align-items: center;
  height: 70px;
  padding: 0 34px 4px 40px;
  color: #ececee;
  font-size: 26px;
  font-weight: 500;
}
.menus {
  display: flex;
  align-items: center;
  gap: 39px;
}
.strong {
  font-weight: 700;
}
.apple {
  width: 28px;
  height: 34px;
}
.extras {
  display: flex;
  align-items: center;
  gap: 37px;
}
.clock {
  font-size: 27px;
}
.x28 {
  width: 28px;
  height: 28px;
}
.x32 {
  width: 32px;
  height: 32px;
}
.x36 {
  width: 36px;
  height: 36px;
}
.x40 {
  width: 40px;
  height: 36px;
}
.input-source {
  display: flex;
  align-items: center;
  justify-content: center;
  width: 44px;
  height: 32px;
  border: 2px solid #ececee;
  border-radius: 6px;
  font-size: 22px;
}
.battery {
  width: 52px;
  height: 26px;
}

/* editor window */
.editor {
  flex: 1;
  display: flex;
  flex-direction: column;
  min-height: 0;
  border: 2px solid #4a4a4a;
  border-top-color: #6c6c6c;
  border-radius: 22px;
  background: #191919;
  overflow: hidden;
}
.titlebar {
  display: flex;
  align-items: center;
  height: 52px;
}
.lights {
  display: flex;
  gap: 16px;
  width: 140px;
  padding-left: 14px;
}
.lights i {
  display: flex;
  align-items: center;
  justify-content: center;
  width: 24px;
  height: 24px;
  border-radius: 50%;
  background: #3e3e3e;
}
.edited::before {
  content: "";
  width: 8px;
  height: 8px;
  border-radius: 50%;
  background: #171717;
}
.title {
  flex: 1;
  display: flex;
  align-items: center;
  justify-content: center;
  gap: 14px;
  margin: 0;
  padding: 0 140px 2px 0;
  color: #a0a0a0;
  font-size: 26px;
  font-weight: 700;
}
.doc {
  width: 24px;
  height: 32px;
}
.maintools {
  display: flex;
  align-items: center;
  height: 62px;
  padding: 2px 16px 0;
}
.btns {
  display: flex;
  gap: 2px;
}
.pivots {
  margin: 0 20px;
}
.tb {
  display: flex;
  align-items: center;
  justify-content: center;
  width: 62px;
  height: 40px;
  background: #383838;
  color: #c8c8c8;
}
.btns .tb:first-child {
  width: 60px;
  border-radius: 5px 0 0 5px;
}
.btns .tb:last-child {
  border-radius: 0 5px 5px 0;
}
.tb svg {
  width: 32px;
  height: 32px;
}
.btns .tb.wide {
  width: 124px;
  gap: 2px;
}
.tb.on {
  background: #6a6a6a;
}
.tb.off {
  background: #292929;
}
.maintools > .tb {
  border-radius: 5px;
}
.spring.a {
  flex: 399 1 0;
}
.spring.b {
  flex: 555 1 0;
}
.services {
  display: flex;
  gap: 20px;
}
.services .tb {
  width: 60px;
  border-radius: 5px;
}
.drop {
  position: relative;
  display: flex;
  align-items: center;
  height: 40px;
}
.drop select {
  width: 100%;
  height: 100%;
  padding-left: 6px;
}
.drop .arr {
  position: absolute;
  right: 8px;
  pointer-events: none;
}
.arr {
  width: 16px;
  height: 10px;
  color: #c8c8c8;
}
.box {
  width: 156px;
  border-radius: 5px;
  background: #383838;
}
.box select {
  padding-left: 10px;
}
.drop.box .arr {
  right: 10px;
}
.layout {
  width: 216px;
}

/* dockable panels */
.workspace {
  flex: 1;
  display: grid;
  grid-template-columns: 1684fr 460fr 548fr;
  column-gap: 4px;
  min-height: 0;
}
.column {
  display: flex;
  flex-direction: column;
  gap: 4px;
  min-width: 0;
}
.panel {
  display: flex;
  flex-direction: column;
  min-width: 0;
  background: #383838;
  border-radius: 6px 6px 0 0;
  overflow: hidden;
}
.scene {
  flex: 542 1 0;
}
.game {
  flex: 870 1 0;
}
.hierarchy {
  flex: 876 1 0;
}
.console {
  flex: 536 1 0;
  border-bottom: 2px solid #232323;
}
.tabs {
  display: flex;
  height: 38px;
  flex: none;
  background: #282828;
  box-shadow: inset 0 -2px #222;
}
.tab {
  display: flex;
  align-items: center;
  height: 38px;
  padding: 2px 0 0 16px;
  gap: 10px;
  border-radius: 6px 6px 0 0;
}
.tab.on {
  background: #3c3c3c;
}
.t-scene {
  width: 150px;
  padding-left: 12px;
}
.t-game {
  width: 144px;
  padding-left: 10px;
  gap: 6px;
}
.t-tree {
  width: 192px;
}
.t-project {
  width: 166px;
  gap: 8px;
}
.t-console {
  width: 172px;
  gap: 8px;
}
.t-info {
  width: 186px;
}
.tab-tools {
  display: flex;
  align-items: center;
  gap: 22px;
  margin-left: auto;
  padding-right: 24px;
}
.dots {
  width: 6px;
  height: 22px;
}
.lock {
  width: 18px;
  height: 22px;
}
.bar {
  display: flex;
  flex: none;
  height: 42px;
  border-bottom: 2px solid #232323;
  background: #3c3c3c;
}
.fill {
  flex: 1;
}
.cells {
  display: flex;
  border-left: 2px solid #232323;
}
.bar .drop + .cells,
.cells + .cells {
  margin-left: 10px;
}
.cell {
  display: flex;
  align-items: center;
  justify-content: center;
  gap: 4px;
  border-right: 2px solid #232323;
  white-space: nowrap;
}
.cell.on {
  background: #505050;
}
.cell.tight {
  gap: 2px;
}
.cell.loose {
  gap: 10px;
}
.cell.split {
  justify-content: space-between;
  padding: 0 10px 0 6px;
}
.split .arr {
  width: 26px;
  height: 24px;
  padding: 7px 0 7px 10px;
  border-left: 2px solid #2e2e2e;
}
.dim {
  color: #b4b4b4;
  font-size: 22px;
}
.w50 {
  width: 52px;
}
.w62 {
  width: 64px;
}
.w64 {
  width: 66px;
}
.w66 {
  width: 68px;
}
.w68 {
  width: 70px;
}
.w76 {
  width: 78px;
}
.w82 {
  width: 85px;
}
.w110 {
  width: 112px;
}
.w116 {
  width: 118px;
}
.w132 {
  width: 134px;
}
.w146 {
  width: 148px;
}
.w218 {
  width: 220px;
}
.i22 {
  width: 22px;
  height: 22px;
}
.i24 {
  width: 24px;
  height: 24px;
}
.i26 {
  width: 26px;
  height: 26px;
}
.i28 {
  width: 28px;
  height: 28px;
}
.i30 {
  width: 30px;
  height: 30px;
}
.shaded {
  width: 240px;
  border-right: 2px solid #232323;
}
.display {
  width: 160px;
  border-right: 2px solid #232323;
}
.aspect {
  width: 320px;
  border-right: 2px solid #232323;
}
.search {
  display: flex;
  flex: 1;
  align-items: center;
  gap: 8px;
  min-width: 0;
  height: 32px;
  margin: 4px 6px 4px 0;
  padding-left: 8px;
  border: 2px solid #212121;
  border-top-color: #0d0d0d;
  border-radius: 8px;
  background: #2a2a2a;
}
.search input {
  flex: 1;
  min-width: 0;
}
.search input::placeholder {
  color: #7c7c7c;
  opacity: 1;
}
.scene-search {
  flex: none;
  width: 410px;
  margin-left: 14px;
}
.lens {
  width: 20px;
  height: 16px;
}
.viewport {
  flex: 1;
  display: flex;
  align-items: center;
  justify-content: center;
  padding-right: 4px;
  border-top: 1px solid #6a6a6a;
  background-color: #474747;
  background-image:
    linear-gradient(#626262, #626262),
    linear-gradient(to right, transparent 114px, #666 114px, #666 115px, transparent 115px),
    linear-gradient(to right, #4b4b4b 1px, transparent 1px),
    linear-gradient(#4a4a4a 1px, transparent 1px);
  background-size: 100% 1px, 231px 100%, 23px 23px, 23px 23px;
  background-position: center, calc(50% - 1px), center, center;
  background-repeat: no-repeat, repeat, repeat, repeat;
}
.frame {
  display: flex;
  align-items: center;
  justify-content: center;
  width: 492px;
  height: 232px;
  border: 1px solid #a8a8a8;
}
.cam {
  width: 20px;
  height: 16px;
}
.gameview {
  flex: 1;
  background: #394c75;
}
.scale {
  display: flex;
  align-items: center;
  gap: 12px;
  padding: 2px 0 0 12px;
}
.scale input {
  appearance: none;
  width: 300px;
  height: 20px;
}
.scale input::-webkit-slider-runnable-track {
  height: 4px;
  background: #5e5e5e;
}
.scale input::-webkit-slider-thumb {
  appearance: none;
  width: 20px;
  height: 20px;
  margin-top: -8px;
  border-radius: 50%;
  background: #999;
}
.muted {
  color: #b6b6b6;
}
.muted .cell:last-child {
  border-right: 0;
}
.add {
  display: flex;
  flex: none;
  align-items: center;
  gap: 8px;
  width: 86px;
  padding-left: 14px;
}
.root {
  display: flex;
  align-items: center;
  height: 32px;
  padding: 0 21px 0 68px;
  border-bottom: 2px solid #2a2a2a;
  background: #4f4f4f;
}
.root strong {
  flex: 1;
  padding-left: 12px;
  font-weight: 600;
}
.fold {
  width: 18px;
  height: 16px;
  margin-right: 8px;
}
.bright {
  color: #fff;
}
.tree {
  flex: 1;
  margin: 0;
  padding: 0 0 0 121px;
  list-style: none;
  background: linear-gradient(to right, #2d2d2d 64px, #383838 64px);
}
.tree li {
  display: flex;
  align-items: center;
  gap: 7px;
  height: 32px;
  padding-bottom: 2px;
}
.counts {
  border-left-color: #232323;
}
.console .cell {
  color: #c0c0c0;
}
.logs {
  display: flex;
  flex: 1;
  align-items: flex-start;
  gap: 7px;
  padding: 10px 0 0 19px;
}
.logs p {
  margin: -4px 0 0;
  line-height: 29px;
  white-space: nowrap;
}
.logicon {
  width: 54px;
  height: 58px;
}
.details {
  height: 138px;
  border-top: 2px solid #232323;
}
.status {
  display: flex;
  align-items: center;
  height: 42px;
  flex: none;
  padding: 2px 0 0 2px;
}
.message {
  flex: 1;
  padding-left: 8px;
}
.stat {
  display: flex;
  align-items: center;
  justify-content: center;
  width: 52px;
  height: 38px;
  border-left: 2px solid #232323;
  color: #c8c8c8;
}

/* macOS dock */
.dock {
  display: flex;
  align-self: center;
  gap: 18px;
  height: 98px;
  margin: 2px 0 10px;
  padding: 13px 13px 0;
  border: 2px solid #7e7e8a;
  border-radius: 34px;
  background: #595966;
}
.app {
  position: relative;
  width: 62px;
  height: 62px;
}
.app svg {
  width: 62px;
  height: 62px;
  overflow: visible;
}
.dot {
  position: absolute;
  left: 27px;
  top: 71px;
  width: 8px;
  height: 8px;
  border-radius: 50%;
  background: #000;
}
.badge {
  position: absolute;
  right: -8px;
  top: -8px;
  width: 28px;
  height: 28px;
  border-radius: 50%;
  background: #e84f43;
  color: #fff;
  font-size: 16px;
  font-weight: 400;
  line-height: 28px;
}
.divider {
  width: 2px;
  height: 70px;
  margin: -1px 8px 0;
  background: #2a2b38;
}
.cal-m {
  fill: #fff;
  font-size: 14px;
  font-weight: 700;
  text-anchor: middle;
}
.cal-d {
  fill: #222;
  font-size: 38px;
  font-weight: 300;
  text-anchor: middle;
}
.tv {
  fill: #fff;
  font-size: 27px;
  font-weight: 500;
  text-anchor: middle;
}

/* save sheet */
.dialog {
  position: absolute;
  top: 368px;
  left: 50%;
  width: 860px;
  height: 390px;
  margin-left: -430px;
  border-radius: 22px;
  background: #fff;
  color: #262626;
  overflow: hidden;
  box-shadow: 0 0 2px rgba(0, 0, 0, 0.7), 0 36px 90px rgba(0, 0, 0, 0.6);
}
.dialog h2 {
  height: 56px;
  margin: 0;
  padding-right: 4px;
  background: #eee;
  color: #454545;
  font-size: 26px;
  font-weight: 600;
  line-height: 54px;
  text-align: center;
}
.rows {
  display: grid;
  grid-template-columns: 231px 470px;
  column-gap: 17px;
  row-gap: 21px;
  align-items: center;
  padding-top: 22px;
}
.rows label {
  padding-top: 4px;
  color: #808080;
  font-size: 22px;
  text-align: right;
}
.rows .low {
  margin-top: 21px;
}
.field {
  position: relative;
  display: flex;
  height: 42px;
  margin: 0 2px;
  border-radius: 9px;
  box-shadow: 0 0 0 1px #e6e6e6, 0 1px 2px #9a9a9a;
}
.field input {
  width: 100%;
  padding-left: 20px;
  border-radius: 9px;
  background: #fff;
  font-size: 25px;
}
.focus {
  height: 40px;
  margin: 1px 4px;
  box-shadow: 0 0 0 6px #98b3f5;
}
.caret {
  position: absolute;
  left: 183px;
  top: 2px;
  width: 2px;
  height: 34px;
  background: #000;
}
.where {
  display: flex;
  gap: 16px;
}
.popup {
  display: flex;
  align-items: center;
  width: 414px;
  height: 42px;
  padding: 0 4px 0 17px;
  border-radius: 9px;
  box-shadow: 0 0 0 1px #e6e6e6, 0 1px 2px #9a9a9a;
}
.popup select {
  flex: 1;
  height: 100%;
  padding-left: 9px;
  font-size: 25px;
}
.folder {
  width: 30px;
  height: 28px;
}
.stepper {
  width: 32px;
  height: 32px;
}
.expand {
  display: flex;
  align-items: center;
  justify-content: center;
  width: 40px;
  height: 42px;
  border-radius: 9px;
  box-shadow: 0 0 0 1px #e6e6e6, 0 1px 2px #9a9a9a;
}
.expand svg {
  width: 16px;
  height: 10px;
}
.actions {
  display: flex;
  justify-content: flex-end;
  gap: 16px;
  padding: 43px 40px 0 0;
}
.action {
  width: 144px;
  height: 40px;
  border-radius: 9px;
  font-size: 25px;
  box-shadow: 0 0 0 1px #e6e6e6, 0 1px 2px #9a9a9a;
}
.primary {
  background: linear-gradient(#4a90f9, #2f70f4);
  color: #fff;
  box-shadow: none;
}
</style>
